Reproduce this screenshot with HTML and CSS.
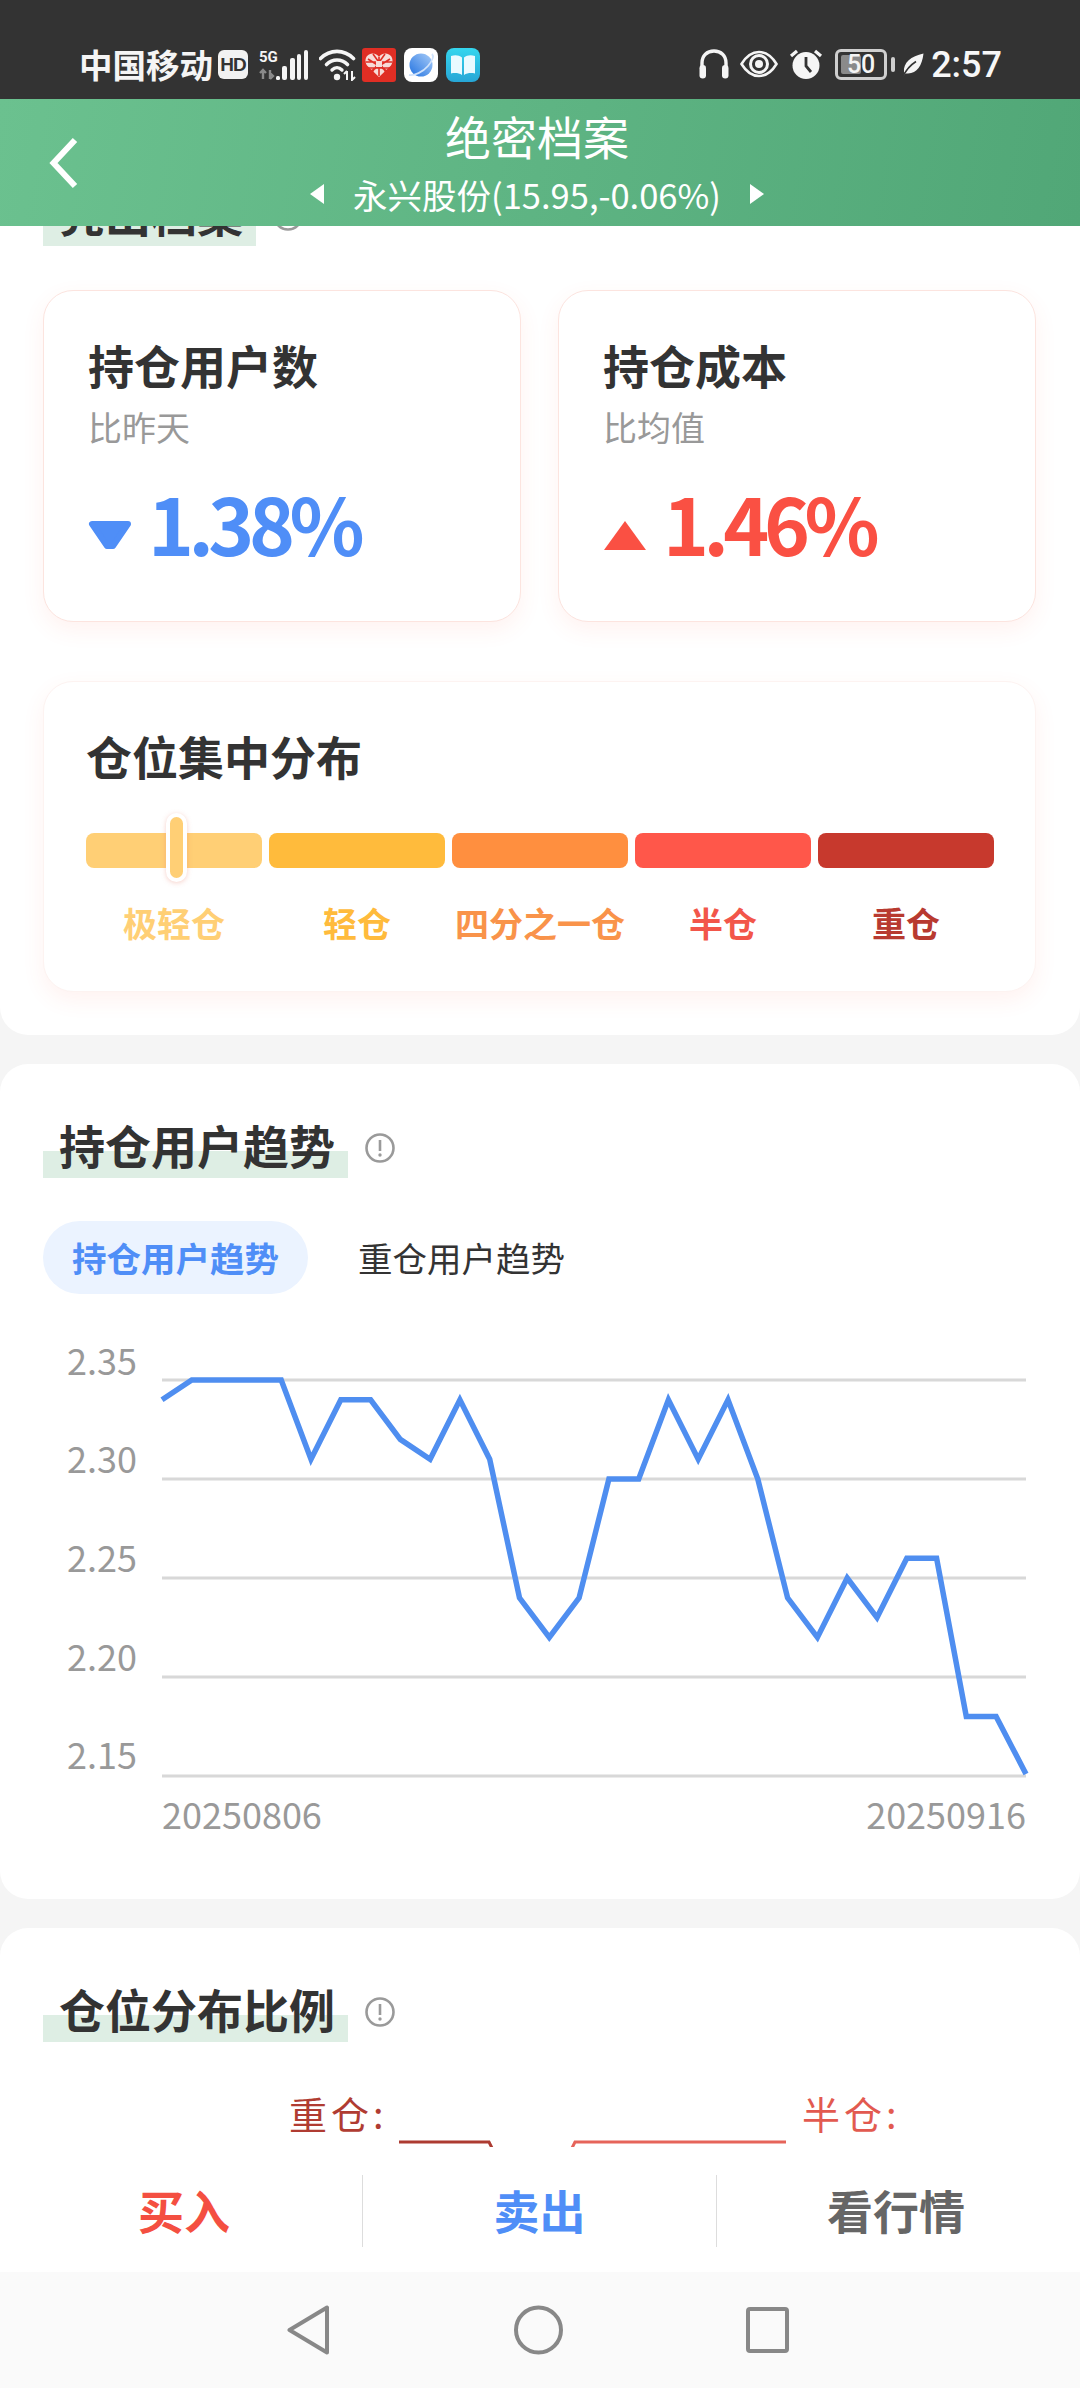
FILE: index.html
```html
<!DOCTYPE html>
<html lang="zh-CN">
<head>
<meta charset="utf-8">
<title>绝密档案</title>
<link rel="stylesheet" href="styles.css">
</head>
<body>
<div class="app">
  <div class="statusbar">
    <div class="status-left">
      <span class="carrier">中国移动</span>
      <span class="hd">HD</span>
      <svg class="net" width="50" height="32" viewBox="0 0 50 32">
        <text x="0" y="13" class="net-5g">5G</text>
        <path d="M4 30V21M1 24l3-3 3 3M11 21v9M11 30l3-3-3-3" fill="none" stroke="#8a8a8a" stroke-width="2.4"/>
        <rect x="17" y="27" width="4" height="4" rx="1.5" fill="#f5f5f5"/>
        <rect x="23" y="17" width="5" height="14" rx="2" fill="#f5f5f5"/>
        <rect x="31" y="9" width="5" height="22" rx="2" fill="#f5f5f5"/>
        <rect x="38" y="5" width="4" height="26" rx="2" fill="#f5f5f5"/>
        <rect x="45" y="1" width="4" height="30" rx="2" fill="#f5f5f5"/>
      </svg>
      <svg class="wifi" width="38" height="32" viewBox="0 0 38 32">
        <path d="M1.500 9.500C11 0 25 0 34.500 9.500" fill="none" stroke="#f5f5f5" stroke-width="3.600" stroke-linecap="round"/>
        <path d="M7.500 15.500C13.500 9.500 22.500 9.500 28.500 15.500" fill="none" stroke="#f5f5f5" stroke-width="3.600" stroke-linecap="round"/>
        <path d="M13 21c3-3 7-3 10 0" fill="none" stroke="#f5f5f5" stroke-width="3.400" stroke-linecap="round"/>
        <circle cx="18" cy="28" r="3.200" fill="#f5f5f5"/>
        <path d="M28 31v-9M25 25l3-3M33 22v9l3-3" fill="none" stroke="#f5f5f5" stroke-width="2"/>
      </svg>
      <svg class="app-ico" width="34" height="34" viewBox="0 0 34 34">
        <rect width="34" height="34" rx="3" fill="#e02e24"/>
        <path d="M17 29L5 17.500C2.500 14 3 8.500 7 6.500 11 4.500 15 6 17 9 19 6 23 4.500 27 6.500 31 8.500 31.500 14 29 17.500Z" fill="#f7dcd8"/>
        <path d="M6 11l22 14M28 11L6 25M11 6l15 21M23 6L8 27M3.500 14h27M5 20h24M17 9v19" stroke="#e02e24" stroke-width="1.600" fill="none"/>
        <rect x="14" y="13" width="6" height="6" fill="#f7dcd8"/>
      </svg>
      <svg class="app-ico" width="34" height="34" viewBox="0 0 34 34">
        <defs><linearGradient id="ball" x1="1" y1="0" x2="0" y2="1"><stop offset="0" stop-color="#a9cdf8"/><stop offset="1" stop-color="#2272e0"/></linearGradient></defs>
        <rect width="34" height="34" rx="8" fill="#fff"/>
        <circle cx="17" cy="17" r="11.500" fill="url(#ball)"/>
        <path d="M5 27C10 28 19 24 24 18S30 8 28 6" fill="none" stroke="#cfe2fb" stroke-width="1.800"/>
      </svg>
      <svg class="app-ico" width="34" height="34" viewBox="0 0 34 34">
        <defs><linearGradient id="bk" x1="0" y1="0" x2="0" y2="1"><stop offset="0" stop-color="#35d6ee"/><stop offset="1" stop-color="#27a6d6"/></linearGradient></defs>
        <rect width="34" height="34" rx="8" fill="url(#bk)"/>
        <path d="M5 8c4-1.500 8-1 11 1.500V27c-3-2-7-2.500-11-1.500ZM29 8c-4-1.500-8-1-11 1.500V27c3-2 7-2.500 11-1.500Z" fill="#eafaff"/>
      </svg>
    </div>
    <div class="status-right">
      <svg class="ico-phones" width="30" height="30" viewBox="0 0 30 30">
        <path d="M3 18V14C3 6.500 8 2 15 2S27 6.500 27 14V18" fill="none" stroke="#f5f5f5" stroke-width="3.400"/>
        <rect x="0.500" y="16" width="6.500" height="13.500" rx="3.200" fill="#f5f5f5"/>
        <rect x="23" y="16" width="6.500" height="13.500" rx="3.200" fill="#f5f5f5"/>
      </svg>
      <svg class="ico-eye" width="38" height="28" viewBox="0 0 38 28">
        <path d="M1.500 14C7 5 13 2 19 2S31 5 36.500 14C31 23 25 26 19 26S7 23 1.500 14Z" fill="none" stroke="#f5f5f5" stroke-width="2.600"/>
        <circle cx="19" cy="14" r="8.500" fill="none" stroke="#f5f5f5" stroke-width="3"/>
        <circle cx="19" cy="14" r="4" fill="#f5f5f5"/>
      </svg>
      <svg class="ico-alarm" width="34" height="30" viewBox="0 0 34 30">
        <circle cx="17" cy="16.500" r="13.500" fill="#f5f5f5"/>
        <path d="M17 8v9l5 6" fill="none" stroke="#333" stroke-width="2.800"/>
        <path d="M2 7l6-5M32 7l-6-5" stroke="#f5f5f5" stroke-width="3.200" fill="none"/>
      </svg>
      <span class="battery"><span class="battery-fill"></span><span class="battery-num">50</span></span>
      <span class="battery-tip"></span>
      <svg class="ico-leaf" width="22" height="24" viewBox="0 0 22 24">
        <path d="M21.500 0.500C20 13 15 20 6 20.500 4.500 20.500 3 20 2 19 1 10 9 3 21.500 0.500ZM1 23.500C3.500 17 8 12 14 8.500" fill="#f5f5f5"/>
        <path d="M1 23.500C4 17 8.500 12 14 8.500" fill="none" stroke="#333" stroke-width="1.600"/>
      </svg>
      <span class="clock">2:57</span>
    </div>
  </div>

  <header class="topbar">
    <svg class="back" width="30" height="52" viewBox="0 0 30 52"><path d="M26 3L4.500 26 26 49" fill="none" stroke="#fff" stroke-width="6"/></svg>
    <div class="topbar-mid">
      <div class="page-title">绝密档案</div>
      <div class="stock-row">
        <span class="tri-left"></span>
        <span class="stock-name">永兴股份(15.95,-0.06%)</span>
        <span class="tri-right"></span>
      </div>
    </div>
  </header>

  <main class="scroll">
    <div class="scroll-inner">
      <section class="panel panel-first">
        <div class="sec-head">
          <h2 class="sec-title">亮出档案</h2>
          <svg class="info" width="30" height="32" viewBox="0 0 30 32"><circle cx="15" cy="16" r="13.500" fill="none" stroke="#9a9a9a" stroke-width="2.600"/><path d="M15 8v11" stroke="#9a9a9a" stroke-width="2.600"/><circle cx="15" cy="23" r="1.700" fill="#9a9a9a"/></svg>
        </div>
        <div class="stat-grid">
          <div class="card stat">
            <div class="card-title">持仓用户数</div>
            <div class="stat-sub">比昨天</div>
            <div class="stat-val down">
              <svg class="tri" width="44" height="30" viewBox="0 0 44 30"><path d="M4 4H40L25 26H19Z" fill="#4f8ef7" stroke="#4f8ef7" stroke-width="6" stroke-linejoin="round"/></svg>
              <span>1.38%</span>
            </div>
          </div>
          <div class="card stat">
            <div class="card-title">持仓成本</div>
            <div class="stat-sub">比均值</div>
            <div class="stat-val up">
              <svg class="tri" width="44" height="30" viewBox="0 0 44 30"><path d="M22 1L43 30H1Z" fill="#fa5043"/></svg>
              <span>1.46%</span>
            </div>
          </div>
        </div>
        <div class="card dist">
          <div class="card-title">仓位集中分布</div>
          <div class="dist-bar">
            <span class="seg seg1"></span><span class="seg seg2"></span><span class="seg seg3"></span><span class="seg seg4"></span><span class="seg seg5"></span>
            <span class="marker"></span>
          </div>
          <div class="dist-labels">
            <span class="lab lab1">极轻仓</span><span class="lab lab2">轻仓</span><span class="lab lab3">四分之一仓</span><span class="lab lab4">半仓</span><span class="lab lab5">重仓</span>
          </div>
        </div>
      </section>

      <section class="panel">
        <div class="sec-head">
          <h2 class="sec-title">持仓用户趋势</h2>
          <svg class="info" width="30" height="32" viewBox="0 0 30 32"><circle cx="15" cy="16" r="13.500" fill="none" stroke="#9a9a9a" stroke-width="2.600"/><path d="M15 8v11" stroke="#9a9a9a" stroke-width="2.600"/><circle cx="15" cy="23" r="1.700" fill="#9a9a9a"/></svg>
        </div>
        <div class="tabs">
          <span class="tab tab-on">持仓用户趋势</span>
          <span class="tab">重仓用户趋势</span>
        </div>
        <svg class="chart" width="993" height="500" viewBox="43 1340 993 500">
          <g class="grid">
            <line x1="162" x2="1026" y1="1380" y2="1380"/>
            <line x1="162" x2="1026" y1="1479" y2="1479"/>
            <line x1="162" x2="1026" y1="1578" y2="1578"/>
            <line x1="162" x2="1026" y1="1677" y2="1677"/>
            <line x1="162" x2="1026" y1="1776" y2="1776"/>
          </g>
          <g class="axis">
            <text x="137" y="1375" text-anchor="end">2.35</text>
            <text x="137" y="1473" text-anchor="end">2.30</text>
            <text x="137" y="1572" text-anchor="end">2.25</text>
            <text x="137" y="1671" text-anchor="end">2.20</text>
            <text x="137" y="1769" text-anchor="end">2.15</text>
            <text x="162" y="1829">20250806</text>
            <text x="1026" y="1829" text-anchor="end">20250916</text>
          </g>
          <polyline class="trend" points="162,1399.800 191.800,1380 221.600,1380 251.400,1380 281.200,1380 311,1459.200 340.800,1399.800 370.600,1399.800 400.300,1439.400 430.100,1459.200 459.900,1399.800 489.700,1459.200 519.500,1597.800 549.300,1637.400 579.100,1597.800 608.900,1479 638.700,1479 668.400,1399.800 698.200,1459.200 728,1399.800 757.800,1479 787.600,1597.800 817.400,1637.400 847.200,1578 877,1617.600 906.800,1558.200 936.600,1558.200 966.300,1716.600 996.100,1716.600 1026,1774"/>
        </svg>
      </section>

      <section class="panel panel-last">
        <div class="sec-head">
          <h2 class="sec-title">仓位分布比例</h2>
          <svg class="info" width="30" height="32" viewBox="0 0 30 32"><circle cx="15" cy="16" r="13.500" fill="none" stroke="#9a9a9a" stroke-width="2.600"/><path d="M15 8v11" stroke="#9a9a9a" stroke-width="2.600"/><circle cx="15" cy="23" r="1.700" fill="#9a9a9a"/></svg>
        </div>
        <svg class="pie" width="993" height="300" viewBox="43 2060 993 300">
          <text x="289" y="2129" class="pie-heavy">重仓:</text>
          <text x="802" y="2129" class="pie-half">半仓:</text>
          <path d="M399 2142H489L492 2148" class="line-heavy"/>
          <path d="M786 2142H575L572 2148" class="line-half"/>
        </svg>
      </section>
    </div>
  </main>

  <div class="actions">
    <div class="act act-buy"><span>买入</span></div>
    <div class="act act-sell"><span>卖出</span></div>
    <div class="act act-quote"><span>看行情</span></div>
  </div>

  <nav class="navbar">
    <svg width="42" height="50" viewBox="0 0 42 50"><path d="M40 2.500V47.500L2.500 25Z" fill="none" stroke="#888" stroke-width="4" stroke-linejoin="round"/></svg>
    <svg width="49" height="50" viewBox="0 0 49 50"><circle cx="24.500" cy="25" r="22.500" fill="none" stroke="#888" stroke-width="4"/></svg>
    <svg class="nav-square" width="43" height="46" viewBox="0 0 43 46"><rect x="2" y="2" width="39" height="42" rx="2" fill="none" stroke="#888" stroke-width="4"/></svg>
  </nav>
</div>
</body>
</html>
```
FILE: styles.css
```css
* { box-sizing: border-box; }
html, body { margin: 0; padding: 0; }
body {
  width: 1080px;
  height: 2388px;
  overflow: hidden;
  font-family: "Noto Sans CJK SC", "Noto Sans", sans-serif;
  color: #333;
  background: #f5f5f5;
}
.app { display: flex; flex-direction: column; width: 1080px; height: 2388px; }

/* status bar */
.statusbar {
  flex: 0 0 99px;
  height: 99px;
  background: #333;
  color: #f5f5f5;
  display: flex;
  justify-content: space-between;
  align-items: flex-start;
  padding: 48px 78px 0 79px;
}
.status-left, .status-right { display: flex; align-items: flex-start; }
.carrier { font-size: 33.500px; line-height: 32px; font-weight: 700; }
.hd {
  width: 30px; height: 29px; margin: 2px 0 0 5px;
  background: #f2f2f2; color: #333; border-radius: 6px;
  font: 700 19px/29px "Liberation Sans", sans-serif; text-align: center; letter-spacing: -1px;
}
.net { margin: 1px 0 0 11px; }
.net-5g { font: 700 15px "Roboto", sans-serif; fill: #f5f5f5; }
.wifi { margin: 1px 0 0 10px; }
.app-ico { margin-left: 8px; }
.wifi + .app-ico { margin-left: 5px; }
.ico-phones { margin-top: 1px; }
.ico-eye { margin: 2px 0 0 11px; }
.ico-alarm { margin: 1px 0 0 11px; }
.battery {
  position: relative;
  width: 52px; height: 31px; margin: 1px 0 0 12px;
  border: 3px solid #cfcfcf; border-radius: 6px;
  display: block;
}
.battery-fill { position: absolute; left: 3px; top: 3px; bottom: 3px; width: 20px; background: #8a8a8a; border-radius: 2px; }
.battery-num {
  position: absolute; left: 0; right: 0; top: 0;
  text-align: center;
  font: 500 25px/25px "Roboto", sans-serif; color: #f5f5f5;
}
.battery-tip { width: 4px; height: 15px; margin: 9px 0 0 4px; background: #cfcfcf; border-radius: 2px; }
.ico-leaf { margin: 5px 0 0 7px; }
.clock { font: 500 36px/34px "Roboto", sans-serif; margin-left: 7px; color: #f7f7f7; }

/* header */
.topbar {
  position: relative;
  z-index: 2;
  flex: 0 0 127px;
  height: 127px;
  display: grid;
  grid-template-columns: 1fr auto 1fr;
  align-items: center;
  background: linear-gradient(100deg, #6bc18f, #51a777);
  color: #fff;
}
.back { margin-left: 49px; }
.topbar-mid { display: flex; flex-direction: column; align-items: center; padding: 3px 6px 0 0; }
.page-title { font-size: 46px; line-height: 58px; }
.stock-row { display: flex; align-items: center; gap: 29px; height: 58px; margin-top: 1px; }
.stock-name { font-size: 34.500px; line-height: 58px; }
.tri-left, .tri-right { width: 0; height: 0; border-top: 10px solid transparent; border-bottom: 10px solid transparent; }
.tri-left { border-right: 14px solid #fff; }
.tri-right { border-left: 14px solid #fff; }

/* scrolling content */
.scroll { flex: 1 1 0; min-height: 0; overflow: hidden; }
.scroll-inner { margin-top: -94px; display: flex; flex-direction: column; gap: 29px; }
.panel { background: #fff; border-radius: 28px; padding: 59px 44px 0 43px; }
.panel-first { padding-bottom: 43px; }
.panel-last { height: 700px; }

.sec-head { display: flex; align-items: flex-start; height: 55px; }
.sec-title {
  margin: 0;
  height: 55px;
  padding: 0 13px 0 16px;
  font-size: 46px;
  line-height: 43px;
  font-weight: 700;
  color: #333;
  white-space: nowrap;
  background: linear-gradient(to bottom, transparent 28px, #deeee4 28px);
}
.info { margin: 9px 0 0 17px; }

.card {
  background: #fff;
  border: 1px solid #fce4df;
  border-radius: 30px;
  box-shadow: 0 8px 22px rgba(250, 90, 70, 0.08);
}
.stat-grid { display: grid; grid-template-columns: 478px 478px; gap: 37px; margin-top: 44px; }
.stat { height: 332px; padding: 46px 20px 0 44px; }
.card-title { font-size: 46px; line-height: 54px; font-weight: 700; color: #333; }
.stat-sub { font-size: 34px; line-height: 40px; color: #999; margin-top: 16px; }
.stat-val {
  display: flex; align-items: center; gap: 16px;
  margin-top: 30px;
  font-size: 78px; line-height: 90px; font-weight: 700;
  letter-spacing: -5.500px;
}
.stat-val .tri { margin-top: 26px; }
.down { color: #4f8ef7; }
.up { color: #fa5043; }

.dist { height: 311px; margin-top: 59px; padding: 46px 42px 0 42px; border-color: #fdf3f1; }
.dist-bar { position: relative; display: grid; grid-template-columns: repeat(5, 176px); gap: 7px; margin-top: 51px; }
.seg { height: 35px; border-radius: 8px; }
.seg1 { background: #ffcf75; }
.seg2 { background: #ffbb3c; }
.seg3 { background: #ff8f3f; }
.seg4 { background: #ff574a; }
.seg5 { background: #c7392d; }
.marker {
  position: absolute; left: 80px; top: -20px;
  width: 21px; height: 69px;
  background: #ffcf75;
  border: 4px solid #fff; border-radius: 11px;
  box-shadow: 0 1px 5px rgba(230, 120, 100, 0.35);
}
.dist-labels { display: grid; grid-template-columns: repeat(5, 176px); gap: 7px; margin-top: 35px; }
.lab { font-size: 34px; line-height: 40px; font-weight: 700; text-align: center; white-space: nowrap; }
.lab1 { color: #ffcf75; }
.lab2 { color: #ffbb3c; }
.lab3 { color: #f9934a; }
.lab4 { color: #f2564a; }
.lab5 { color: #b83a30; }

.tabs { display: flex; align-items: center; gap: 21px; margin-top: 43px; }
.tab { height: 73px; padding: 0 29px; font-size: 34.500px; line-height: 73px; color: #333; border-radius: 37px; white-space: nowrap; }
.tab-on { background: #ebf3ff; color: #4f8ef7; font-weight: 700; }
.chart { display: block; margin: 46px 0 59px; }
.grid line { stroke: #d8d8d8; stroke-width: 3; }
.axis text { font-size: 36px; fill: #999; }
.trend { fill: none; stroke: #4f8ef0; stroke-width: 5.500; stroke-linejoin: miter; }

.pie { display: block; margin-top: 18px; }
.pie-heavy { font-size: 38px; letter-spacing: 4px; fill: #b03c32; }
.pie-half { font-size: 38px; letter-spacing: 4px; fill: #e25a50; }
.line-heavy { fill: none; stroke: #ad3b31; stroke-width: 3; }
.line-half { fill: none; stroke: #e6645a; stroke-width: 3; }

/* bottom actions */
.actions {
  flex: 0 0 125px;
  height: 125px;
  display: grid;
  grid-template-columns: 362px 355px 363px;
  background: #fff;
  padding: 28px 0 25px;
}
.act { display: flex; align-items: center; justify-content: center; font-size: 46px; line-height: 60px; font-weight: 700; padding-bottom: 4px; }
.act-buy { color: #f44f41; padding-left: 6px; }
.act-sell { color: #4f8ef7; border-left: 1px solid #ddd; border-right: 1px solid #ddd; }
.act-quote { color: #666; padding-right: 5px; }

.navbar {
  flex: 0 0 116px;
  height: 116px;
  display: flex;
  align-items: center;
  gap: 185px;
  padding-left: 287px;
  background: #fafafa;
}
.nav-square { margin-left: -2px; }
```
